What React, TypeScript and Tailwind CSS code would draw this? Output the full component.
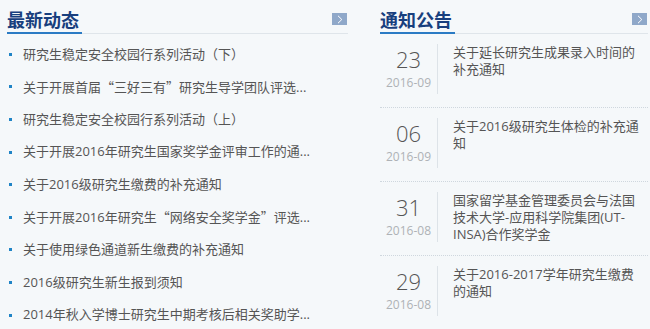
import React from 'react';

const news = [
  '研究生稳定安全校园行系列活动（下）',
  '关于开展首届“三好三有”研究生导学团队评选...',
  '研究生稳定安全校园行系列活动（上）',
  '关于开展2016年研究生国家奖学金评审工作的通...',
  '关于2016级研究生缴费的补充通知',
  '关于开展2016年研究生“网络安全奖学金”评选...',
  '关于使用绿色通道新生缴费的补充通知',
  '2016级研究生新生报到须知',
  '2014年秋入学博士研究生中期考核后相关奖助学...',
];

const notices = [
  { day: '23', month: '2016-09', title: '关于延长研究生成果录入时间的补充通知' },
  { day: '06', month: '2016-09', title: '关于2016级研究生体检的补充通知' },
  { day: '31', month: '2016-08', title: '国家留学基金管理委员会与法国技术大学-应用科学院集团(UT-INSA)合作奖学金' },
  { day: '29', month: '2016-08', title: '关于2016-2017学年研究生缴费的通知' },
];

// full-width quotes like the original Chinese font
const withQuotes = (text: string) =>
  text.split(/([“”])/).map((part, i) =>
    part === '“' || part === '”' ? (
      <span key={i} className="font-['Noto_Sans_CJK_SC']">
        {part}
      </span>
    ) : (
      <React.Fragment key={i}>{part}</React.Fragment>
    )
  );

const Header = ({ title }: { title: string }) => (
  <div className="flex h-[34px] items-end justify-between border-b border-[#dfe5ea]">
    <h2 className="mb-[-1px] w-[75px] border-b-2 border-[#2b7bc4] text-[18px] font-bold leading-[24px] text-[#183f7e]">
      {title}
    </h2>
    <a href="#" className="mr-px flex h-[12px] w-[15px] items-center justify-center self-start mt-[13px] bg-[#8fa8c9]">
      <svg width="6" height="9" viewBox="0 0 6 9" fill="none">
        <path d="M1 0.8L4.8 4.5L1 8.2" stroke="#fff" strokeWidth="1" />
      </svg>
    </a>
  </div>
);

const App = () => {
  return (
    <div className="h-[329px] w-[650px] overflow-hidden bg-[#f5f8fa] pl-[7px] font-['Open_Sans','Noto_Sans_CJK_SC',sans-serif]">
      <div className="flex gap-[32px]">
        {/* 最新动态 */}
        <div className="w-[341px] shrink-0">
          <Header title="最新动态" />
          <ul className="pt-[4px]">
            {news.map((n, i) => (
              <li key={i} className="flex h-[32.6px] items-center text-[13px] text-[#555]">
                <span className="ml-[2px] mr-[11px] h-[3px] w-[3px] shrink-0 bg-[#1f84c6]"></span>
                <span className="whitespace-nowrap">{withQuotes(n)}</span>
              </li>
            ))}
          </ul>
        </div>

        {/* 通知公告 */}
        <div className="w-[268px] shrink-0">
          <Header title="通知公告" />
          <ul>
            {notices.map((n, i) => (
              <li key={i} className="flex h-[74px] border-b border-dotted border-[#cfd7de] pt-[10px]">
                <div className="flex h-[50px] w-[58px] shrink-0 flex-col items-center border-r border-[#dde3e8] pt-[3px]">
                  <span className="text-[22px] font-light leading-[24px] text-[#555]">{n.day}</span>
                  <span className="mt-[4px] text-[12px] leading-[16px] text-[#aeb2b6]">{n.month}</span>
                </div>
                <p className="w-[205px] pl-[15px] text-[13px] leading-[17px] text-[#555]">{n.title}</p>
              </li>
            ))}
          </ul>
        </div>
      </div>
    </div>
  );
};

export default App;
